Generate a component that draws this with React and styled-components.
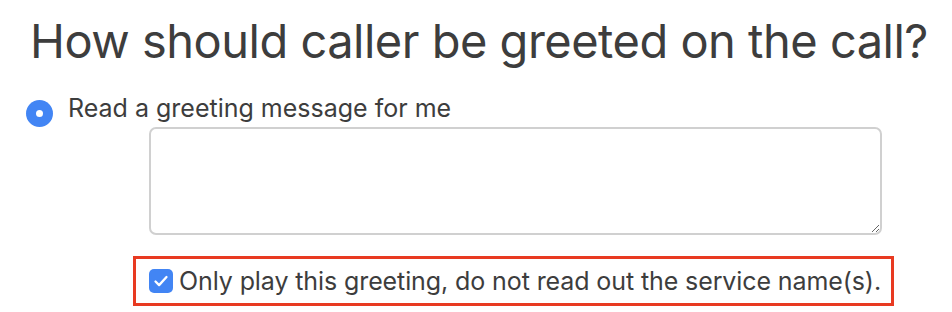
import React, { useState } from "react";
import styled, { createGlobalStyle } from "styled-components";

const GlobalStyle = createGlobalStyle`
  body {
    margin: 0;
    background: #ffffff;
    font-family: Inter, "Noto Sans", sans-serif;
    color: #3b3b3b;
  }
`;

const Page = styled.div`
  width: 952px;
  height: 312px;
  padding: 11px 0 0 30px;
  box-sizing: border-box;
  overflow: hidden;
`;

const Title = styled.h1`
  margin: 0;
  font-size: 47px;
  font-weight: 400;
  line-height: 60px;
  letter-spacing: -0.5px;
  color: #3d3d3d;
`;

const RadioRow = styled.label`
  display: flex;
  align-items: center;
  gap: 15px;
  margin: 17px 0 0 -4px;
  font-size: 25px;
  line-height: 30px;
  color: #3d3d3d;
`;

const RadioDot = styled.span`
  width: 27px;
  height: 27px;
  border-radius: 50%;
  background: #4285f4;
  display: flex;
  align-items: center;
  justify-content: center;
  margin-top: 12px;
  flex-shrink: 0;

  &::after {
    content: "";
    width: 7px;
    height: 7px;
    border-radius: 50%;
    background: #ffffff;
  }
`;

const MessageBox = styled.textarea`
  display: block;
  width: 733px;
  height: 108px;
  margin: 0 0 0 119px;
  box-sizing: border-box;
  border: 2px solid #d0d0d0;
  border-radius: 7px;
  font-family: inherit;
  font-size: 18px;
  resize: vertical;
  outline: none;
`;

const Highlight = styled.div`
  display: inline-flex;
  align-items: center;
  gap: 6px;
  margin: 21px 0 0 103px;
  padding: 0 10px 0 13px;
  height: 50px;
  box-sizing: border-box;
  border: 3px solid #e83a21;
`;

const CheckBox = styled.span`
  width: 24px;
  height: 24px;
  border-radius: 5px;
  background: #4285f4;
  display: flex;
  align-items: center;
  justify-content: center;
  flex-shrink: 0;
`;

const CheckText = styled.span`
  font-size: 25px;
  line-height: 30px;
  letter-spacing: -0.1px;
  color: #3d3d3d;
  white-space: nowrap;
`;

export default function App() {
  const [message, setMessage] = useState("");

  return (
    <>
      <GlobalStyle />
      <Page>
        <Title>How should caller be greeted on the call?</Title>
        <RadioRow>
          <RadioDot />
          <span>Read a greeting message for me</span>
        </RadioRow>
        <MessageBox value={message} onChange={(e) => setMessage(e.target.value)} />
        <Highlight>
          <CheckBox>
            <svg width="18" height="18" viewBox="0 0 18 18" fill="none">
              <path d="M3.5 9.5l3.6 3.6L14.5 5" stroke="#fff" strokeWidth="2.3" strokeLinecap="round" strokeLinejoin="round" />
            </svg>
          </CheckBox>
          <CheckText>Only play this greeting, do not read out the service name(s).</CheckText>
        </Highlight>
      </Page>
    </>
  );
}
